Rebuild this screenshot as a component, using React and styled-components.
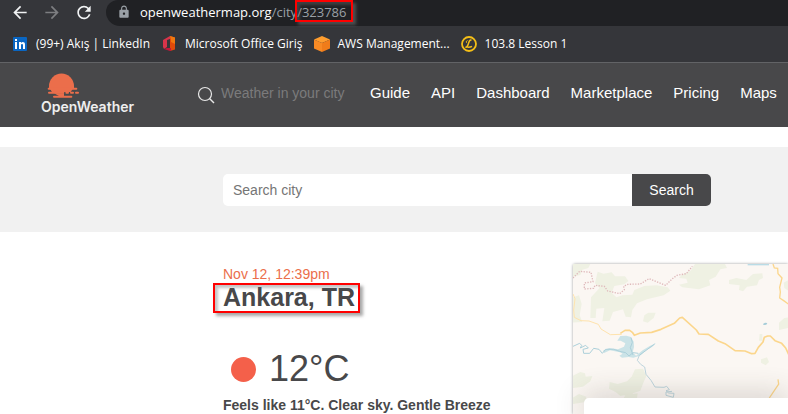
import styled, { createGlobalStyle, css } from "styled-components";
import { MdArrowBack, MdArrowForward, MdLock, MdRefresh } from "react-icons/md";

const GlobalStyle = createGlobalStyle`
  * {
    box-sizing: border-box;
  }

  body {
    margin: 0;
    overflow-x: hidden;
    background: #ffffff;
    color: #48484a;
    font-family: "Liberation Sans", Arial, sans-serif;
    font-size: 14px;
  }
`;

const browserFont = css`
  font-family: "Open Sans", "Noto Sans", sans-serif;
`;

const highlight = css`
  position: relative;

  &::after {
    content: "";
    position: absolute;
    border: 2px solid #ff0000;
    box-shadow: 3px 3px 3px rgba(110, 110, 110, 0.6),
      inset 3px 3px 3px rgba(110, 110, 110, 0.4);
    pointer-events: none;
  }
`;

const Toolbar = styled.div`
  ${browserFont}
  display: flex;
  align-items: center;
  height: 26px;
  padding-left: 10px;
  gap: 12px;
  background: #35363a;
`;

const ToolButton = styled.button`
  display: flex;
  align-items: center;
  justify-content: center;
  width: 20px;
  height: 26px;
  padding: 0 0 2px;
  border: 0;
  background: none;
  color: ${(props) => (props.disabled ? "#7d7e81" : "#f1f3f4")};
  font-size: 21px;
`;

const AddressBar = styled.div`
  display: flex;
  align-items: center;
  flex: 1;
  height: 26px;
  padding: 0 0 2px 11px;
  gap: 9px;
  border-radius: 12px 0 0 14px;
  background: #202124;
  color: #9aa0a6;
  font-size: 13px;
  line-height: 24px;
  white-space: nowrap;

  svg {
    font-size: 14px;
  }
`;

const Host = styled.span`
  color: #ffffff;
`;

const CityId = styled.span`
  ${highlight}
  &::after {
    inset: -3px -6px -1px -2px;
  }
`;

const BookmarksBar = styled.nav`
  ${browserFont}
  display: flex;
  align-items: center;
  height: 37px;
  padding-left: 12px;
  gap: 11px;
  border-bottom: 1px solid #626366;
  background: #35363a;
`;

const Bookmark = styled.a`
  display: flex;
  align-items: center;
  gap: 8px;
  color: #ffffff;
  font-size: 12px;
  line-height: 16px;
  text-decoration: none;
  white-space: nowrap;
`;

const Header = styled.header`
  display: flex;
  align-items: center;
  height: 64px;
  padding-left: 41px;
  background: #48484a;
`;

const LogoLink = styled.a`
  display: flex;
  flex-direction: column;
  width: 156px;
  padding-bottom: 2px;
  color: #eeeeee;
  font-family: Inter, sans-serif;
  font-size: 14px;
  font-weight: 600;
  line-height: 16px;
  text-decoration: none;

  svg {
    margin-left: 6px;
  }
`;

const CityFilter = styled.label`
  display: flex;
  align-items: center;
  width: 173px;
  gap: 6px;
  flex-shrink: 0;
`;

const FilterInput = styled.input`
  width: 132px;
  padding: 0 0 4px;
  border: 0;
  background: none;
  color: #ffffff;
  font: 14px "Liberation Sans", Arial, sans-serif;

  &::placeholder {
    color: #7b7b7c;
  }
`;

const Menu = styled.nav`
  display: flex;
  gap: 21px;
  padding-bottom: 4px;
`;

const MenuLink = styled.a`
  color: #ffffff;
  font-size: 15px;
  line-height: 20px;
  text-decoration: none;
`;

const SearchSection = styled.section`
  margin-top: 20px;
  padding: 27px 24px 26px 223px;
  background: #f1f1f1;
`;

const SearchForm = styled.form`
  display: flex;
  max-width: 488px;
  height: 32px;
`;

const SearchInput = styled.input`
  flex: 1;
  min-width: 0;
  padding: 0 10px;
  border: 0;
  border-radius: 5px 0 0 5px;
  background: #ffffff;
  font: 14px "Liberation Sans", Arial, sans-serif;

  &::placeholder {
    color: #757575;
  }
`;

const SearchButton = styled.button`
  width: 79px;
  border: 0;
  border-radius: 0 5px 5px 0;
  background: #48484a;
  color: #ffffff;
  font: 14px "Liberation Sans", Arial, sans-serif;
`;

const Main = styled.main`
  display: grid;
  grid-template-columns: 350px 1fr;
  padding: 32px 0 0 223px;
`;

const DateText = styled.div`
  padding-top: 2px;
  color: #eb6e4b;
  line-height: 16px;
`;

const CityName = styled.h2`
  ${highlight}
  width: fit-content;
  margin: 0;
  font-size: 25px;
  line-height: 30px;

  &::after {
    inset: 1px -5px -1px -10px;
  }
`;

const Temperature = styled.div`
  display: flex;
  align-items: center;
  margin-top: 35px;
  padding-left: 8px;
  gap: 13px;
  font-size: 36px;
  line-height: 44px;
`;

const Sun = styled.span`
  width: 25px;
  height: 25px;
  border-radius: 50%;
  background: #f4604a;
`;

const Summary = styled.div`
  margin-top: 6px;
  font-weight: 700;
  line-height: 16px;
`;

const MapPanel = styled.div`
  position: relative;
  height: 150px;
  border-radius: 2px 0 0 0;
  box-shadow: 0 0 3px rgba(0, 0, 0, 0.4);
  background: #fbf7f3;

  > svg {
    display: block;
    width: 100%;
    height: 100%;
  }
`;

const ForecastCard = styled.div`
  position: absolute;
  right: 0;
  bottom: 0;
  left: 11px;
  height: 16px;
  border-radius: 5px 0 0 0;
  background: #ffffff;
  box-shadow: 0 0 30px rgba(60, 50, 40, 0.3);
`;

function LinkedInIcon() {
  return (
    <svg width="16" height="16" viewBox="0 0 16 16" aria-hidden="true">
      <rect x="1" y="1" width="14" height="14" rx="1" fill="#0a66c2" />
      <path
        d="M3 6h2v7H3zM3 3h2v2H3zM7 6h2v1c1-1.500 4-1.500 4 1.500V13h-2V9c0-1.500-2-1.500-2 0v4H7z"
        fill="#ffffff"
      />
    </svg>
  );
}

function OfficeIcon() {
  return (
    <svg width="16" height="16" viewBox="0 0 16 16" aria-hidden="true">
      <path d="M2 4l7-4v3L6 4v7l-3 2-1-2z" fill="#d8344a" />
      <path d="M9 0l5 1.500v12L9 15z" fill="#e04a0a" />
      <path d="M9 0l5 1.500V8L10 6V3z" fill="#f0780f" />
      <path d="M3 13l3-1h4v3H9z" fill="#c4163a" />
    </svg>
  );
}

function AwsIcon() {
  return (
    <svg width="16" height="16" viewBox="0 0 16 16" aria-hidden="true">
      <path d="M8 0l8 3.500L8 7 0 3.500z" fill="#ff9d2e" />
      <path d="M0 3.500L8 7v9l-8-3.500z" fill="#f88a24" />
      <path d="M16 3.500L8 7v9l8-3.500z" fill="#f07c1a" />
    </svg>
  );
}

function LessonIcon() {
  return (
    <svg width="16" height="16" viewBox="0 0 16 16" fill="none" stroke="#f5bf17" aria-hidden="true">
      <circle cx="8" cy="8" r="7" strokeWidth="1.800" />
      <path d="M10.500 4.200C8.500 3.500 8 6 7.300 8S6 11.500 4.500 11.300c2-.6 4 .5 6.500-1" strokeWidth="1.500" />
      <path d="M6.500 4.500C5 5 5 6.500 6 7" strokeWidth="1" />
    </svg>
  );
}

function Logo() {
  return (
    <svg width="34" height="26" viewBox="138 40 102 78" fill="#eb6e4b" aria-hidden="true">
      <path d="M144 86v-7a37 37 0 0 1 75 0v7z" />
      <rect x="140" y="84" width="89" height="6" rx="3" />
      <path d="M147 88h68l-6 9h-56z" />
      <rect x="141" y="96" width="49" height="6" rx="3" />
      <rect x="193" y="96" width="11" height="6" rx="3" />
      <rect x="207" y="96" width="12" height="6" rx="3" />
      <rect x="222" y="96" width="12" height="6" rx="3" />
      <path d="M159 101h30v8h-15z" />
      <rect x="156" y="108" width="58" height="6" rx="3" />
    </svg>
  );
}

function SearchIcon() {
  return (
    <svg width="18" height="18" viewBox="0 0 18 18" fill="none" stroke="#e8e8e8" aria-hidden="true">
      <circle cx="8" cy="8" r="6.500" strokeWidth="1.200" />
      <path d="M12.500 12.500L17 17" strokeWidth="1.400" />
    </svg>
  );
}

function TerrainMap() {
  return (
    <svg viewBox="38 42 648 450" preserveAspectRatio="xMinYMin slice" role="img" aria-label="Map">
      <g fill="#eff1e3">
        <path d="M36 42h54l-6 12-18 5-6 16-24 6z" />
        <path d="M112 65l18 6 24-4 10 12 30 0 10 14-12 10-30 5-8 20 14 14 18-6 30-2 6-14 30-12 36-2 34 6 8 10-20 14-50 12-30 12-14 20-4 22-16-2-8-22-30 8-10 26-22 2 6-40-24 2-2 28-16 0 2-62 26-28-14-14z" />
        <path d="M36 142l20-6 8 26-6 34 8 20-30 2z" />
        <path d="M364 75l26-12 14-21h90l6 12-20 4-14 22-20 10 4 16-34 12-50-6-10-8 26-6-4-12-22-2z" />
        <path d="M506 90l22-6 30 6 20-18 28-2 2 14-12 6-6 16-30 4-12 14-12-4 2-14-32-4z" />
        <path d="M252 196l12-8h22l-6 16-18 14-14-4z" />
        <path d="M670 98l14-8v32l-12-8z" />
        <path d="M656 218l16-14 12-2v32l-28 6z" />
        <path d="M36 378l24-12 14 4 2 10 20-2-6 16-22 16-32 4z" />
        <path d="M148 396l24 6 28-8 14-14 10-22 24-2 10 22-8 18-10 26-22 8-8 14-18-8-12 2-14-12-20-10z" />
        <path d="M36 444l20-12 22 8-2 16-40 6zM196 434l36-4-2 14h-40z" />
        <path d="M602 328l18-6 6 14-10 10-14-8zM598 252h8v20h-10z" />
      </g>
      <path
        d="M38 84l20-20 34 3 6 28-26 4v18l28-2 4-9 28 3 10 14 36 8 14-12-2-10 12-6 38-1 26-16 50 20 20-20 14-10 28-5 18-22"
        fill="none"
        stroke="#dfb9bb"
        strokeWidth="4"
        strokeDasharray="4 4"
      />
      <path d="M562 42h64v4h-64z" fill="#b9dce6" />
      <path d="M608 222l6-4 7 1-3 5-8 1z" fill="#a4ccd8" />
      <path
        d="M38 132l6 14-4 34 2 22 20 10 24 1 28 10 8 14 28 17 34-1"
        fill="none"
        stroke="#ffe3ad"
        strokeWidth="3"
        strokeLinejoin="round"
      />
      <path
        d="M180 250l14-9h14l8 6 6 9 18-7 34-2 28-9 40-18 16-16 8-2 42 38 8 12 28 1 30 20 20 8 30 21 30 1 20 8 10-1 10-18 14-16 4-14 10-4h8l14 14 20 8 12 14 12 26"
        fill="none"
        stroke="#fbd68c"
        strokeWidth="5"
        strokeLinejoin="round"
      />
      <path
        d="M638 42l4 12 10 1 1 16 12 13-7 28 2 14-2 18 12 8 14 10M627 444l28-42-2-14"
        fill="none"
        stroke="#fbd68c"
        strokeWidth="4"
      />
      <path
        d="M180 258l18-1 14 4 8 14 1 16-4 16 10 10 20-16 20-12 20-10-12 12-18 10-18 16-20 6-14-2-20 2-8-6 10-6-8-4-30-6-18 8-2-8 18-7 26 4 18-8 4-10-14-8-10 0z"
        fill="#cbe3e7"
      />
      <g fill="none" stroke="#acd0da" strokeWidth="3" strokeLinejoin="round">
        <path d="M36 290l22-10 6 6-4 8 16-8 8 8-16 4 2 12 18 0 12-15 16 3 10 12 10-12 24 0 18 6 18 4 10 10 12-10 16 2M237 316l46-34M212 263l4 14-6 16 8 22" />
        <path
          d="M237 316l-6 15 10 12 12 8 4 22 15 18 12 20 27 1 8-3 8 10-10 3 8 7 16 1-2 12-22-6 0-10 18-2"
          stroke="#bed5dd"
        />
      </g>
    </svg>
  );
}

const bookmarks = [
  { title: "(99+) Akış | LinkedIn", Icon: LinkedInIcon },
  { title: "Microsoft Office Giriş", Icon: OfficeIcon },
  { title: "AWS Management...", Icon: AwsIcon },
  { title: "103.8 Lesson 1", Icon: LessonIcon },
];

const menu = ["Guide", "API", "Dashboard", "Marketplace", "Pricing", "Maps"];

export default function App() {
  return (
    <>
      <GlobalStyle />
      <Toolbar>
        <ToolButton aria-label="Back">
          <MdArrowBack />
        </ToolButton>
        <ToolButton aria-label="Forward" disabled>
          <MdArrowForward />
        </ToolButton>
        <ToolButton aria-label="Reload">
          <MdRefresh />
        </ToolButton>
        <AddressBar>
          <MdLock />
          <span>
            <Host>openweathermap.org</Host>/city<CityId>/323786</CityId>
          </span>
        </AddressBar>
      </Toolbar>
      <BookmarksBar>
        {bookmarks.map(({ title, Icon }) => (
          <Bookmark href="#" key={title}>
            <Icon />
            {title}
          </Bookmark>
        ))}
      </BookmarksBar>

      <Header>
        <LogoLink href="#">
          <Logo />
          OpenWeather
        </LogoLink>
        <CityFilter>
          <SearchIcon />
          <FilterInput placeholder="Weather in your city" aria-label="Weather in your city" />
        </CityFilter>
        <Menu>
          {menu.map((item) => (
            <MenuLink href="#" key={item}>
              {item}
            </MenuLink>
          ))}
        </Menu>
      </Header>

      <SearchSection>
        <SearchForm onSubmit={(event) => event.preventDefault()}>
          <SearchInput placeholder="Search city" aria-label="Search city" />
          <SearchButton type="submit">Search</SearchButton>
        </SearchForm>
      </SearchSection>

      <Main>
        <div>
          <DateText>Nov 12, 12:39pm</DateText>
          <CityName>Ankara, TR</CityName>
          <Temperature>
            <Sun />
            12°C
          </Temperature>
          <Summary>Feels like 11°C. Clear sky. Gentle Breeze</Summary>
        </div>
        <MapPanel>
          <TerrainMap />
          <ForecastCard />
        </MapPanel>
      </Main>
    </>
  );
}
